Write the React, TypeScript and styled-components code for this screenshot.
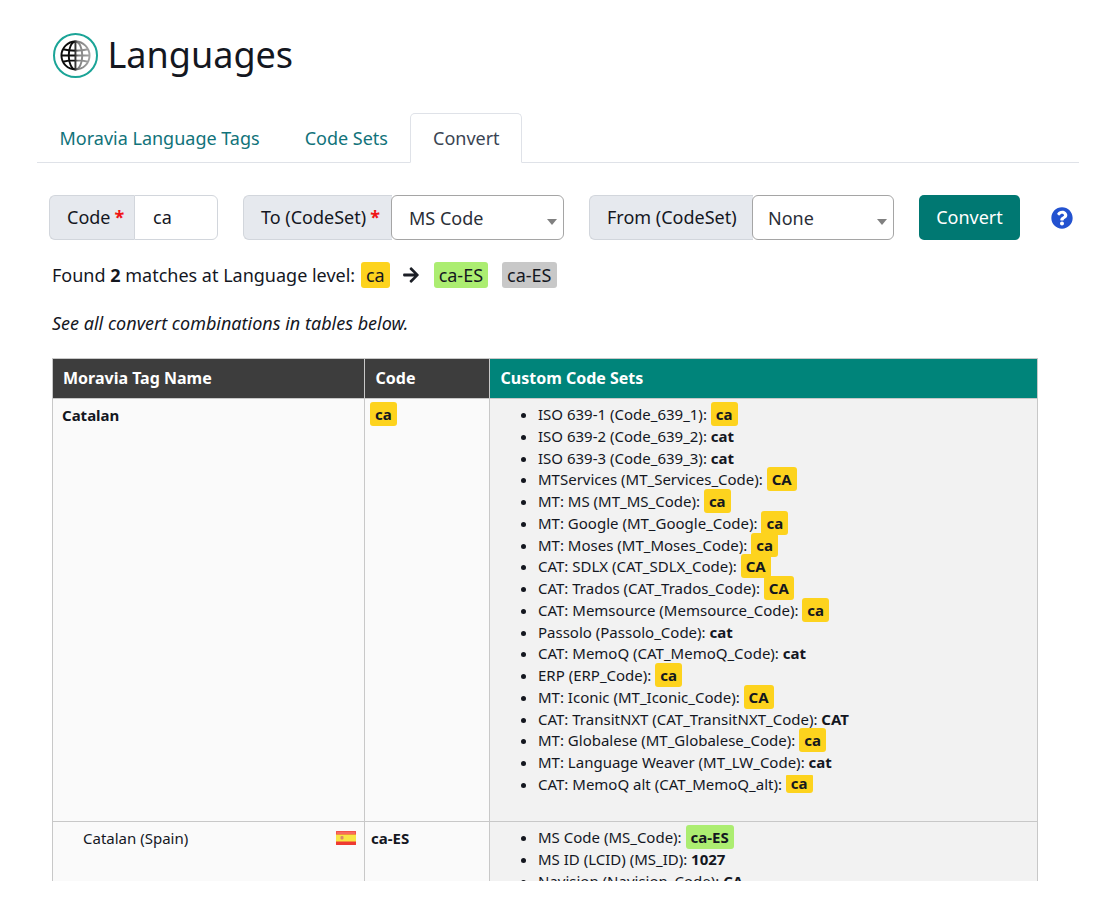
import styled, { createGlobalStyle } from "styled-components";
import { FaArrowRight, FaQuestionCircle } from "react-icons/fa";

const Global = createGlobalStyle`
  html, body {
    margin: 0;
    padding: 0;
    background: #fff;
    font-family: "Noto Sans", "Open Sans", sans-serif;
    color: #14171f;
  }
`;

const Page = styled.div`
  height: 881px;
  overflow: hidden;
  padding: 0 31px 0 37px;
`;

const Heading = styled.h1`
  display: flex;
  align-items: center;
  gap: 9.5px;
  margin: 0;
  padding: 32px 0 0 16px;
  height: 79px;
  box-sizing: border-box;
  font-size: 36px;
  font-weight: 400;
  line-height: 45px;
`;

const Title = styled.span`
  padding-bottom: 2px;
`;

const IconRing = styled.span`
  display: flex;
  align-items: center;
  justify-content: center;
  width: 45px;
  height: 45px;
  box-sizing: border-box;
  border: 2px solid #1ba497;
  border-radius: 50%;
`;

const Tabs = styled.div`
  display: flex;
  margin-top: 34px;
  height: 50px;
  box-sizing: border-box;
  border-bottom: 1px solid #dfe2e8;
`;

const Tab = styled.div<{ $active?: boolean }>`
  height: 50px;
  box-sizing: border-box;
  padding: 11px 21.5px 0 ${(p) => (p.$active ? "22.5px" : "21.5px")};
  margin-left: ${(p) => (p.$active ? "-1px" : "0")};
  font-size: 18px;
  line-height: 27px;
  color: ${(p) => (p.$active ? "#3a4453" : "#11737a")};
  border: 1px solid ${(p) => (p.$active ? "#dfe2e8" : "transparent")};
  border-bottom: 1px solid ${(p) => (p.$active ? "#fff" : "transparent")};
  border-radius: 5px 5px 0 0;
`;

const Form = styled.div`
  display: flex;
  align-items: center;
  padding: 32px 0 0 12px;
`;

const Group = styled.div<{ $gap: number }>`
  display: flex;
  height: 45px;
  margin-right: ${(p) => p.$gap}px;
`;

const Addon = styled.div<{ $w: number }>`
  display: flex;
  align-items: center;
  width: ${(p) => p.$w}px;
  box-sizing: border-box;
  padding: 0 0 2px 17px;
  background: #e6e9ee;
  border: 1px solid #d2d6dc;
  border-right: 0;
  border-radius: 6px 0 0 6px;
  font-size: 18px;
`;

const Req = styled.span`
  color: #f01414;
  font-weight: 700;
  margin-left: 4px;
`;

const CodeInput = styled.div`
  width: 84px;
  box-sizing: border-box;
  padding: 8px 0 0 18px;
  border: 1px solid #d2d6dc;
  border-radius: 0 6px 6px 0;
  font-size: 18px;
  line-height: 27px;
`;

const Select = styled.div<{ $w: number; $pad: number }>`
  position: relative;
  width: ${(p) => p.$w}px;
  box-sizing: border-box;
  padding: 9px 0 0 ${(p) => p.$pad}px;
  border: 1px solid #a5a5a5;
  border-radius: 6px;
  margin-left: -1px;
  background: #fff;
  font-size: 18px;
  line-height: 27px;
  color: #2b2f38;

  &::after {
    content: "";
    position: absolute;
    right: 6px;
    top: 23px;
    border-left: 5px solid transparent;
    border-right: 5px solid transparent;
    border-top: 6px solid #808080;
  }
`;

const Primary = styled.button`
  width: 101px;
  height: 45px;
  padding: 0 0 2px;
  border: 0;
  border-radius: 5px;
  background: #007872;
  color: #fff;
  font: 400 18px "Noto Sans", sans-serif;
  margin-right: 31px;
`;

const Help = styled.span`
  display: flex;
  color: #2352d0;
  font-size: 22px;
`;

const Result = styled.div`
  display: flex;
  align-items: center;
  padding: 23px 0 0 15px;
  height: 47px;
  box-sizing: border-box;
  font-size: 18px;
  white-space: pre;
`;

const Tag = styled.span<{ $bg: string; $ml: number }>`
  display: inline-block;
  background: ${(p) => p.$bg};
  border-radius: 3px;
  padding: 0 5px;
  margin-left: ${(p) => p.$ml}px;
  line-height: 26px;
`;

const Arrow = styled.span`
  display: flex;
  margin-left: 12px;
  font-size: 18px;
  color: #1c1f26;
`;

const Note = styled.p`
  margin: 0;
  padding: 23px 0 0 15px;
  font-size: 18px;
  line-height: 27px;
  font-style: italic;
`;

const Table = styled.table`
  width: 986px;
  margin: 21px 0 0 15px;
  border-collapse: collapse;
  table-layout: fixed;
  font-size: 15px;
`;

const Th = styled.th<{ $teal?: boolean; $w?: number }>`
  width: ${(p) => (p.$w ? `${p.$w}px` : "auto")};
  height: 40px;
  box-sizing: border-box;
  padding: 0 10.5px 2px;
  background: ${(p) => (p.$teal ? "#00847a" : "#3d3d3d")};
  border: 1px solid #c8c8c8;
  color: #fff;
  font-size: 16px;
  font-weight: 700;
  text-align: left;

  &:first-child {
    padding-left: 10px;
  }
`;

const Td = styled.td<{ $shade?: boolean }>`
  padding: ${(p) => (p.$shade ? "5px" : "4px")} 5px 5px;
  vertical-align: top;
  line-height: 22px;
  background: ${(p) => (p.$shade ? "#f2f2f2" : "#fafafa")};
  border: 1px solid #c8c8c8;
`;

const LangName = styled.div<{ $sub?: boolean }>`
  display: flex;
  align-items: center;
  justify-content: space-between;
  padding: 1px 3px 0 ${(p) => (p.$sub ? "25px" : "4px")};
  line-height: 22px;
  font-weight: ${(p) => (p.$sub ? 400 : 700)};
`;

const CodeText = styled.b`
  display: inline-block;
  padding: 1px 0 0 1px;
  line-height: 22px;
`;

const Codes = styled.ul`
  margin: 0;
  padding: 0 0 20.9px 43px;
`;

const Item = styled.li`
  line-height: 21.75px;
`;

const Badge = styled.b<{ $bg: string }>`
  background: ${(p) => p.$bg};
  border-radius: 3px;
  padding: 2px 5px;
`;

// the last entry of the list sits in a tighter box than the others
const ShortBadge = styled.b<{ $bg: string }>`
  display: inline-block;
  background: ${(p) => p.$bg};
  border-radius: 1px 1px 3px 3px;
  padding: 0 5px;
  height: 18px;
  line-height: 17px;
  vertical-align: 1px;
`;

const YELLOW = "#fdd31e";
const GREEN = "#aced71";

type Code = [string, string, boolean?];

const catalan: Code[] = [
  ["ISO 639-1 (Code_639_1)", "ca", true],
  ["ISO 639-2 (Code_639_2)", "cat"],
  ["ISO 639-3 (Code_639_3)", "cat"],
  ["MTServices (MT_Services_Code)", "CA", true],
  ["MT: MS (MT_MS_Code)", "ca", true],
  ["MT: Google (MT_Google_Code)", "ca", true],
  ["MT: Moses (MT_Moses_Code)", "ca", true],
  ["CAT: SDLX (CAT_SDLX_Code)", "CA", true],
  ["CAT: Trados (CAT_Trados_Code)", "CA", true],
  ["CAT: Memsource (Memsource_Code)", "ca", true],
  ["Passolo (Passolo_Code)", "cat"],
  ["CAT: MemoQ (CAT_MemoQ_Code)", "cat"],
  ["ERP (ERP_Code)", "ca", true],
  ["MT: Iconic (MT_Iconic_Code)", "CA", true],
  ["CAT: TransitNXT (CAT_TransitNXT_Code)", "CAT"],
  ["MT: Globalese (MT_Globalese_Code)", "ca", true],
  ["MT: Language Weaver (MT_LW_Code)", "cat"],
];

const Globe = () => (
  <svg width="31" height="31" viewBox="0 0 32 32" fill="none" strokeWidth="2">
    <defs>
      <linearGradient id="half" gradientUnits="userSpaceOnUse" x1="0" x2="32" y1="0" y2="0">
        <stop offset="0.45" stopColor="#0c0c0c" />
        <stop offset="0.58" stopColor="#7d7d7d" />
        <stop offset="1" stopColor="#a8a8a8" />
      </linearGradient>
    </defs>
    <g stroke="url(#half)">
      <circle cx="16" cy="16" r="14.5" />
      <ellipse cx="16" cy="16" rx="7" ry="14.5" />
      <path d="M16 1.5V30.5M3 9.5C10 11.5 22 11.5 29 9.5M3 22.5C10 20.5 22 20.5 29 22.5M1.5 16H30.5" />
    </g>
  </svg>
);

const SpainFlag = () => (
  <svg width="20" height="14" viewBox="0 0 20 14">
    <rect width="20" height="14" rx="0.5" fill="#ee3a32" />
    <rect x="0.5" y="0.5" width="19" height="2.5" fill="#f76a60" />
    <rect y="3.5" width="20" height="7" fill="#f8e545" />
    <rect x="4.5" y="5" width="3" height="3.6" rx="1" fill="#d98a6a" />
  </svg>
);

export default function App() {
  return (
    <Page>
      <Global />
      <Heading>
        <IconRing>
          <Globe />
        </IconRing>
        <Title>Languages</Title>
      </Heading>
      <Tabs>
        <Tab>Moravia Language Tags</Tab>
        <Tab>Code Sets</Tab>
        <Tab $active>Convert</Tab>
      </Tabs>
      <Form>
        <Group $gap={25}>
          <Addon $w={85}>
            Code<Req>*</Req>
          </Addon>
          <CodeInput>ca</CodeInput>
        </Group>
        <Group $gap={25}>
          <Addon $w={149}>
            To (CodeSet)<Req>*</Req>
          </Addon>
          <Select $w={173} $pad={17}>
            MS Code
          </Select>
        </Group>
        <Group $gap={25}>
          <Addon $w={164}>From (CodeSet)</Addon>
          <Select $w={142} $pad={15}>
            None
          </Select>
        </Group>
        <Primary>Convert</Primary>
        <Help>
          <FaQuestionCircle />
        </Help>
      </Form>
      <Result>
        Found <b>2</b> matches at Language level:{" "}
        <Tag $bg={YELLOW} $ml={1}>
          ca
        </Tag>
        <Arrow>
          <FaArrowRight />
        </Arrow>
        <Tag $bg={GREEN} $ml={14}>
          ca-ES
        </Tag>
        <Tag $bg="#c8c8c8" $ml={14}>
          ca-ES
        </Tag>
      </Result>
      <Note>See all convert combinations in tables below.</Note>
      <Table>
        <thead>
          <tr>
            <Th $w={312}>Moravia Tag Name</Th>
            <Th $w={125}>Code</Th>
            <Th $teal>Custom Code Sets</Th>
          </tr>
        </thead>
        <tbody>
          <tr>
            <Td>
              <LangName>Catalan</LangName>
            </Td>
            <Td>
              <Badge $bg={YELLOW}>ca</Badge>
            </Td>
            <Td $shade>
              <Codes>
                {catalan.map(([label, value, hit]) => (
                  <Item key={label}>
                    {label}: {hit ? <Badge $bg={YELLOW}>{value}</Badge> : <b>{value}</b>}
                  </Item>
                ))}
                <Item>
                  CAT: MemoQ alt (CAT_MemoQ_alt): <ShortBadge $bg={YELLOW}>ca</ShortBadge>
                </Item>
              </Codes>
            </Td>
          </tr>
          <tr>
            <Td>
              <LangName $sub>
                Catalan (Spain)
                <SpainFlag />
              </LangName>
            </Td>
            <Td>
              <CodeText>ca-ES</CodeText>
            </Td>
            <Td $shade>
              <Codes>
                <Item>
                  MS Code (MS_Code): <Badge $bg={GREEN}>ca-ES</Badge>
                </Item>
                <Item>
                  MS ID (LCID) (MS_ID): <b>1027</b>
                </Item>
                <Item>
                  Navision (Navision_Code): <b>CA</b>
                </Item>
              </Codes>
            </Td>
          </tr>
        </tbody>
      </Table>
    </Page>
  );
}
